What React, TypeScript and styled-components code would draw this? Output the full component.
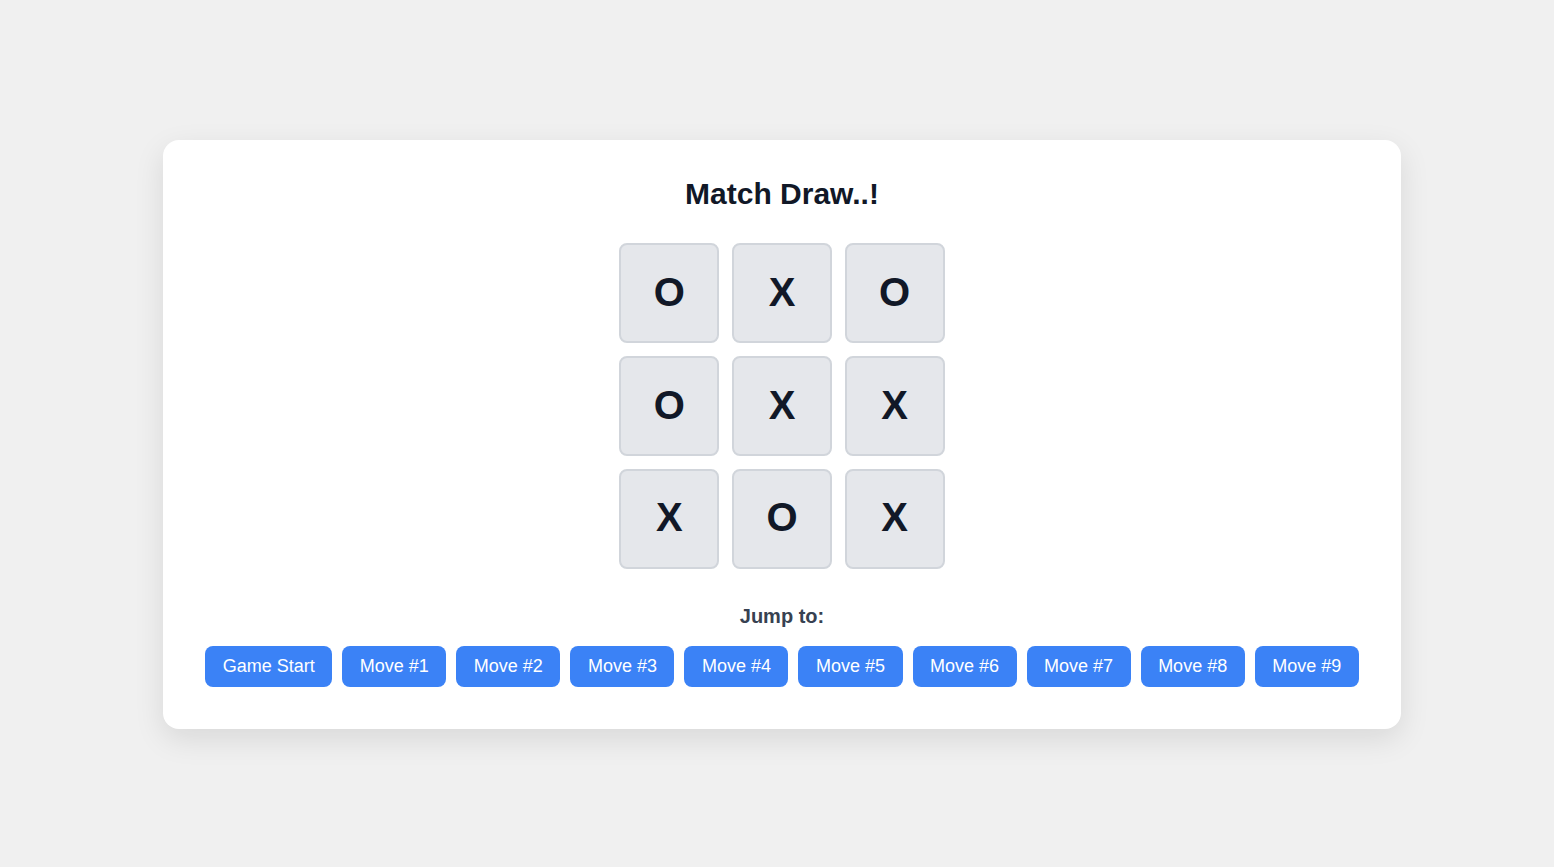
import React from "react";
import styled, { createGlobalStyle } from "styled-components";

const GlobalStyle = createGlobalStyle`
  * { box-sizing: border-box; }
  html, body { margin: 0; padding: 0; }
  body {
    background: #f0f0f0;
    font-family: "Liberation Sans", Arial, sans-serif;
  }
`;

const Page = styled.div`
  min-height: 100vh;
  padding-left: 10px;
  padding-top: 2px;
  display: flex;
  align-items: center;
  justify-content: center;
`;

const Card = styled.div`
  width: 1238px;
  background: #ffffff;
  border-radius: 16px;
  padding: 40px 40px 42px;
  box-shadow: 0 10px 30px rgba(0, 0, 0, 0.1);
  display: flex;
  flex-direction: column;
  align-items: center;
`;

const Title = styled.h1`
  margin: 0;
  font-size: 30px;
  font-weight: 700;
  color: #111827;
  line-height: 28px;
`;

const Board = styled.div`
  margin-top: 35px;
  display: grid;
  grid-template-columns: repeat(3, 100px);
  grid-auto-rows: 100px;
  gap: 12.6px;
`;

const Cell = styled.button`
  width: 100px;
  height: 100px;
  background: #e5e7eb;
  border: 2px solid #d1d5db;
  border-radius: 8px;
  font-family: "Liberation Sans", Arial, sans-serif;
  font-size: 40px;
  font-weight: 700;
  color: #111827;
  display: flex;
  align-items: center;
  justify-content: center;
  padding: 0 0 2px;
  cursor: pointer;
`;

const JumpLabel = styled.div`
  margin-top: 36px;
  font-size: 20px;
  font-weight: 700;
  color: #374151;
  line-height: normal;
`;

const Moves = styled.div`
  margin-top: 18px;
  display: flex;
  gap: 10px;
  justify-content: center;
`;

const MoveButton = styled.button`
  background: #3b82f6;
  color: #ffffff;
  border: none;
  border-radius: 8px;
  padding: 10px 17.5px;
  font-family: "Liberation Sans", Arial, sans-serif;
  font-size: 18px;
  line-height: normal;
  white-space: nowrap;
  flex-shrink: 0;
  cursor: pointer;
`;

const squares = ["O", "X", "O", "O", "X", "X", "X", "O", "X"];
const moves = [
  "Game Start",
  "Move #1",
  "Move #2",
  "Move #3",
  "Move #4",
  "Move #5",
  "Move #6",
  "Move #7",
  "Move #8",
  "Move #9",
];

export default function App() {
  return (
    <>
      <GlobalStyle />
      <Page>
        <Card>
          <Title>Match Draw..!</Title>
          <Board>
            {squares.map((s, i) => (
              <Cell key={i}>{s}</Cell>
            ))}
          </Board>
          <JumpLabel>Jump to:</JumpLabel>
          <Moves>
            {moves.map((m) => (
              <MoveButton key={m}>{m}</MoveButton>
            ))}
          </Moves>
        </Card>
      </Page>
    </>
  );
}
